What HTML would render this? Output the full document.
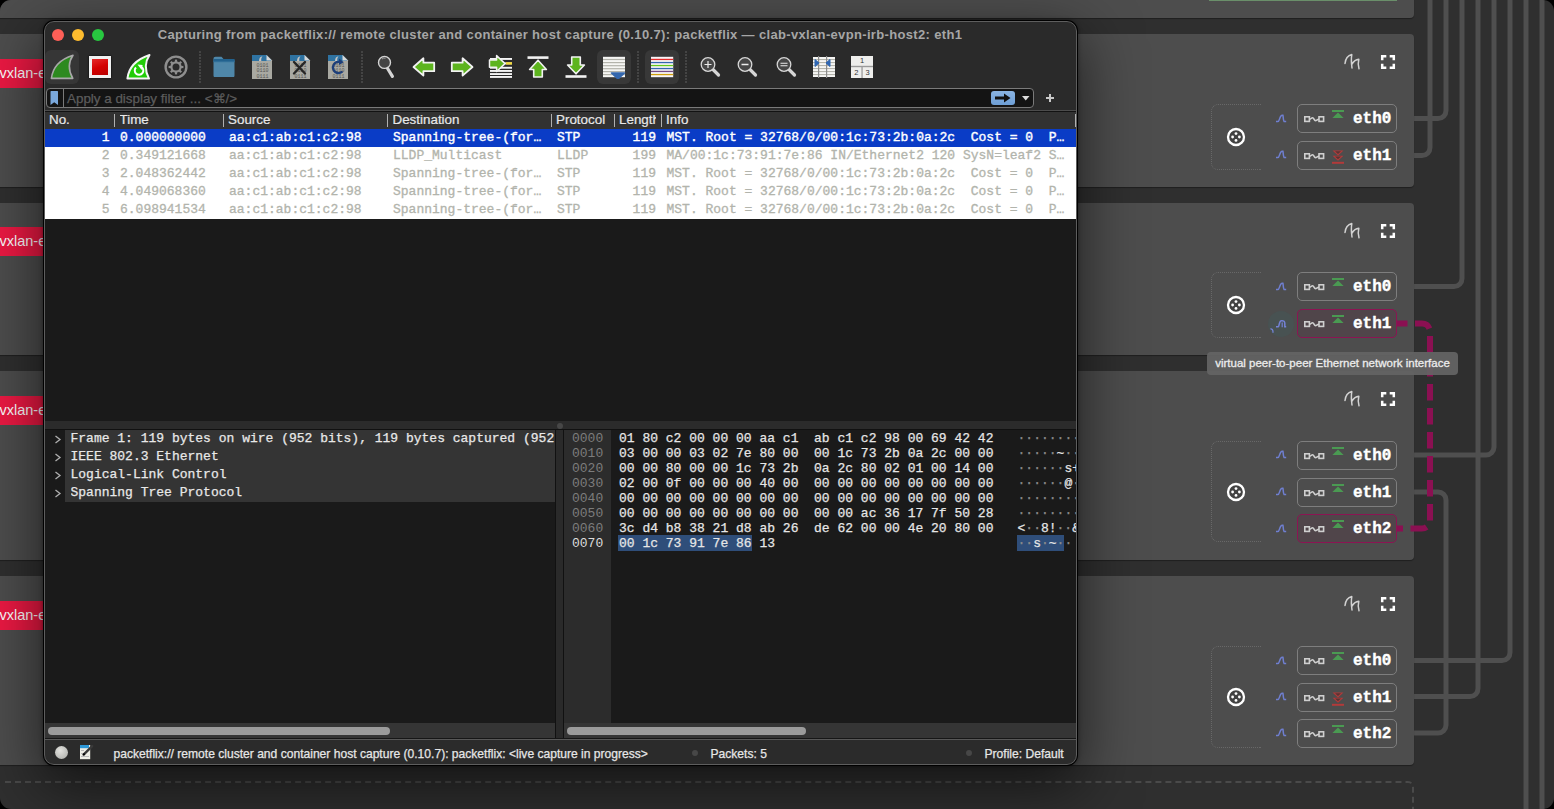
<!DOCTYPE html>
<html><head><meta charset="utf-8"><style>
*{margin:0;padding:0;box-sizing:border-box}
html,body{width:1554px;height:809px;overflow:hidden;background:#000}
body{font-family:"Liberation Sans",sans-serif;position:relative}
.a{position:absolute}
#screen{position:absolute;left:0;top:0;width:1554px;height:809px;border-radius:11px;overflow:hidden;background:#2f2f2f}
.panel{position:absolute;left:-20px;width:1434px;background:#4d4d4d;border-radius:4px;box-shadow:0 1px 1px rgba(0,0,0,.35)}
.pill{position:absolute;left:-20px;width:64px;height:29px;background:#ec1943;color:#fff;font-size:14.5px;line-height:29px;padding-left:19.5px;white-space:nowrap;overflow:hidden}
.eth{position:absolute;left:1297px;width:100px;height:29px;border:1px solid #7e7e7e;border-radius:5px}
.eth.sel{border-color:#8c1453;background:#50454a}
.ethtxt{position:absolute;left:55px;top:5px;-webkit-text-stroke:0.35px #fff;font-family:"Liberation Mono",monospace;font-weight:bold;font-size:16px;color:#fff}
.mv{position:absolute;left:1211px;width:50px;border:1px dotted #686868;border-right:none;border-radius:7px 0 0 7px}
.mono{font-family:"Liberation Mono",monospace;font-size:13px;white-space:pre}
.hdr{position:absolute;top:110.5px;height:18px;line-height:18px;font-size:13.4px;color:#e8e8e8;white-space:nowrap;-webkit-text-stroke:0.2px #e8e8e8}
.hsep{position:absolute;top:114px;width:1px;height:13px;background:#b0b0b0}
.row{position:absolute;left:0;width:1554px;height:18px;line-height:18px}
.row span{position:absolute;top:0}
.sb{position:absolute;top:740.5px;line-height:26px;font-size:12.08px;color:#e6e6e6;white-space:nowrap;-webkit-text-stroke:0.25px #e6e6e6}
.lt{-webkit-text-stroke:0.25px currentColor}
</style></head><body><div id="screen">
<svg class="a" style="left:0;top:0" width="1554" height="809"><g fill="none" stroke="#4f4f4f" stroke-width="5">
<path d="M1397 155.5H1422A8 8 0 0 0 1430 147.5V-5"/>
<path d="M1397 118.5H1438A8 8 0 0 0 1446 110.5V-5"/>
<path d="M1397 286.5H1454A8 8 0 0 0 1462 278.5V-5"/>
<path d="M1397 455H1486A8 8 0 0 0 1494 447V-5"/>
<path d="M1397 492H1438A8 8 0 0 1 1446 500V725A8 8 0 0 1 1438 733H1397"/>
<path d="M1397 660.5H1502A8 8 0 0 0 1510 652.5V-5"/>
<path d="M1397 696.5H1470A8 8 0 0 0 1478 688.5V-5"/>
<path d="M1526 -5V815"/>
<path d="M1542 -5V815"/>
</g></svg>
<div class="panel" style="top:-30px;height:48px"></div>
<div class="a" style="left:1209px;top:0;width:188px;height:1px;background:#6a8f6a"></div>
<div class="panel" style="top:34px;height:153px"></div>
<div class="panel" style="top:203px;height:152px"></div>
<div class="panel" style="top:371px;height:189px"></div>
<div class="panel" style="top:576px;height:189px"></div>
<div class="a" style="left:5px;top:781px;width:1409px;height:40px;border:2px dashed #4a4a4a;border-bottom:none;border-left:none;border-radius:0 6px 0 0"></div>
<div class="pill" style="top:59px">vxlan-evpn</div>
<div class="pill" style="top:227px">vxlan-evpn</div>
<div class="pill" style="top:396px">vxlan-evpn</div>
<div class="pill" style="top:601px">vxlan-evpn</div>
<svg class="a" style="left:1343px;top:53px" width="18" height="18"><path d="M2 10.5C2.5 6 5 2.6 8.8 1.6C8.2 5 8.3 10 9 15M9 11C10.5 8.5 13 6.5 15.8 6.2C15 9.5 15 13 16 15.8" fill="none" stroke="#d2d2d2" stroke-width="1.5" stroke-linecap="round" stroke-linejoin="round"/></svg>
<svg class="a" style="left:1380px;top:54px" width="16" height="16"><path d="M2.2 6.3V2.2H6.3M9.7 2.2H13.8V6.3M13.8 9.7V13.8H9.7M6.3 13.8H2.2V9.7" fill="none" stroke="#fff" stroke-width="2.5"/></svg>
<div class="mv" style="top:104px;height:66px"></div>
<svg class="a" style="left:1226px;top:127px" width="20" height="20"><circle cx="10" cy="10" r="8" fill="#424242" stroke="#fff" stroke-width="2.3"/><g fill="#fff"><circle cx="10" cy="6.6" r="1.4"/><circle cx="10" cy="13.4" r="1.4"/><circle cx="6.6" cy="10" r="1.4"/><circle cx="13.4" cy="10" r="1.4"/></g></svg>
<svg class="a" style="left:1275px;top:113.5px" width="12" height="9"><path d="M1 7.6H2.8C4.6 7.6 4.6 1.3 7.2 1.3H7.9C8.3 2.5 8.3 7.6 9.3 7.6H11.2" fill="none" stroke="#6f7fd0" stroke-width="1.5"/></svg>
<svg class="a" style="left:1275px;top:150px" width="12" height="9"><path d="M1 7.6H2.8C4.6 7.6 4.6 1.3 7.2 1.3H7.9C8.3 2.5 8.3 7.6 9.3 7.6H11.2" fill="none" stroke="#6f7fd0" stroke-width="1.5"/></svg>
<div class="eth" style="top:104px">
<svg class="a" style="left:6px;top:11px" width="21" height="7"><g fill="none" stroke="#cfcfcf" stroke-width="1.6"><rect x="0.8" y="0.8" width="4.6" height="4.6"/><rect x="15" y="0.8" width="4.6" height="4.6"/><path d="M5.4 3.3C7 3.3 7.2 1.8 8.6 1.8C10 1.8 10 4.6 11.5 4.6C12.8 4.6 13 3.3 15 3.3"/></g></svg>
<svg class="a" style="left:34px;top:5px" width="13" height="9"><rect x="0" y="0" width="12" height="2" fill="#4a9a52"/><path d="M6 2.5L11.6 8H0.4Z" fill="#4a9a52"/></svg>
<div class="ethtxt">eth0</div>
</div>
<div class="eth" style="top:141px">
<svg class="a" style="left:6px;top:11px" width="21" height="7"><g fill="none" stroke="#cfcfcf" stroke-width="1.6"><rect x="0.8" y="0.8" width="4.6" height="4.6"/><rect x="15" y="0.8" width="4.6" height="4.6"/><path d="M5.4 3.3C7 3.3 7.2 1.8 8.6 1.8C10 1.8 10 4.6 11.5 4.6C12.8 4.6 13 3.3 15 3.3"/></g></svg>
<svg class="a" style="left:34px;top:8px" width="13" height="15"><g fill="#b23a3a"><path d="M0.5 0.5H11.5L6 5.6Z"/><path d="M0.5 5.8H11.5L6 10.8Z"/><rect x="0" y="11.8" width="12" height="2"/></g><path d="M3 1.3H9L6 4Z M3 6.6H9L6 9.3Z" fill="#5a3434"/></svg>
<div class="ethtxt">eth1</div>
</div>
<svg class="a" style="left:1343px;top:222px" width="18" height="18"><path d="M2 10.5C2.5 6 5 2.6 8.8 1.6C8.2 5 8.3 10 9 15M9 11C10.5 8.5 13 6.5 15.8 6.2C15 9.5 15 13 16 15.8" fill="none" stroke="#d2d2d2" stroke-width="1.5" stroke-linecap="round" stroke-linejoin="round"/></svg>
<svg class="a" style="left:1380px;top:223px" width="16" height="16"><path d="M2.2 6.3V2.2H6.3M9.7 2.2H13.8V6.3M13.8 9.7V13.8H9.7M6.3 13.8H2.2V9.7" fill="none" stroke="#fff" stroke-width="2.5"/></svg>
<div class="mv" style="top:272px;height:66px"></div>
<svg class="a" style="left:1226px;top:295px" width="20" height="20"><circle cx="10" cy="10" r="8" fill="#424242" stroke="#fff" stroke-width="2.3"/><g fill="#fff"><circle cx="10" cy="6.6" r="1.4"/><circle cx="10" cy="13.4" r="1.4"/><circle cx="6.6" cy="10" r="1.4"/><circle cx="13.4" cy="10" r="1.4"/></g></svg>
<svg class="a" style="left:1275px;top:281.5px" width="12" height="9"><path d="M1 7.6H2.8C4.6 7.6 4.6 1.3 7.2 1.3H7.9C8.3 2.5 8.3 7.6 9.3 7.6H11.2" fill="none" stroke="#6f7fd0" stroke-width="1.5"/></svg>
<div class="a" style="left:1268.1px;top:310.5px;width:26px;height:26px;border-radius:50%;background:#485252"></div>
<svg class="a" style="left:1268px;top:313.5px" width="20" height="20"><path d="M8 12.8H10.3C11.2 12.8 11 7 13.2 6.8C15.6 6.5 16.6 7 16.8 9V12.8H18.2" fill="none" stroke="#7482d6" stroke-width="1.5"/><path d="M14.2 8.5V13.2" fill="none" stroke="#7482d6" stroke-width="1.2"/><path d="M2.4 14.8C4 14.6 5.2 15.8 5 18.8" fill="none" stroke="#7482d6" stroke-width="1.3"/></svg>
<div class="eth" style="top:272px">
<svg class="a" style="left:6px;top:11px" width="21" height="7"><g fill="none" stroke="#cfcfcf" stroke-width="1.6"><rect x="0.8" y="0.8" width="4.6" height="4.6"/><rect x="15" y="0.8" width="4.6" height="4.6"/><path d="M5.4 3.3C7 3.3 7.2 1.8 8.6 1.8C10 1.8 10 4.6 11.5 4.6C12.8 4.6 13 3.3 15 3.3"/></g></svg>
<svg class="a" style="left:34px;top:5px" width="13" height="9"><rect x="0" y="0" width="12" height="2" fill="#4a9a52"/><path d="M6 2.5L11.6 8H0.4Z" fill="#4a9a52"/></svg>
<div class="ethtxt">eth0</div>
</div>
<div class="eth sel" style="top:309px">
<svg class="a" style="left:6px;top:11px" width="21" height="7"><g fill="none" stroke="#cfcfcf" stroke-width="1.6"><rect x="0.8" y="0.8" width="4.6" height="4.6"/><rect x="15" y="0.8" width="4.6" height="4.6"/><path d="M5.4 3.3C7 3.3 7.2 1.8 8.6 1.8C10 1.8 10 4.6 11.5 4.6C12.8 4.6 13 3.3 15 3.3"/></g></svg>
<svg class="a" style="left:34px;top:5px" width="13" height="9"><rect x="0" y="0" width="12" height="2" fill="#4a9a52"/><path d="M6 2.5L11.6 8H0.4Z" fill="#4a9a52"/></svg>
<div class="ethtxt">eth1</div>
</div>
<svg class="a" style="left:1343px;top:390px" width="18" height="18"><path d="M2 10.5C2.5 6 5 2.6 8.8 1.6C8.2 5 8.3 10 9 15M9 11C10.5 8.5 13 6.5 15.8 6.2C15 9.5 15 13 16 15.8" fill="none" stroke="#d2d2d2" stroke-width="1.5" stroke-linecap="round" stroke-linejoin="round"/></svg>
<svg class="a" style="left:1380px;top:391px" width="16" height="16"><path d="M2.2 6.3V2.2H6.3M9.7 2.2H13.8V6.3M13.8 9.7V13.8H9.7M6.3 13.8H2.2V9.7" fill="none" stroke="#fff" stroke-width="2.5"/></svg>
<div class="mv" style="top:441px;height:101px"></div>
<svg class="a" style="left:1226px;top:482px" width="20" height="20"><circle cx="10" cy="10" r="8" fill="#424242" stroke="#fff" stroke-width="2.3"/><g fill="#fff"><circle cx="10" cy="6.6" r="1.4"/><circle cx="10" cy="13.4" r="1.4"/><circle cx="6.6" cy="10" r="1.4"/><circle cx="13.4" cy="10" r="1.4"/></g></svg>
<svg class="a" style="left:1275px;top:450px" width="12" height="9"><path d="M1 7.6H2.8C4.6 7.6 4.6 1.3 7.2 1.3H7.9C8.3 2.5 8.3 7.6 9.3 7.6H11.2" fill="none" stroke="#6f7fd0" stroke-width="1.5"/></svg>
<svg class="a" style="left:1275px;top:487px" width="12" height="9"><path d="M1 7.6H2.8C4.6 7.6 4.6 1.3 7.2 1.3H7.9C8.3 2.5 8.3 7.6 9.3 7.6H11.2" fill="none" stroke="#6f7fd0" stroke-width="1.5"/></svg>
<svg class="a" style="left:1275px;top:523.5px" width="12" height="9"><path d="M1 7.6H2.8C4.6 7.6 4.6 1.3 7.2 1.3H7.9C8.3 2.5 8.3 7.6 9.3 7.6H11.2" fill="none" stroke="#6f7fd0" stroke-width="1.5"/></svg>
<div class="eth" style="top:441px">
<svg class="a" style="left:6px;top:11px" width="21" height="7"><g fill="none" stroke="#cfcfcf" stroke-width="1.6"><rect x="0.8" y="0.8" width="4.6" height="4.6"/><rect x="15" y="0.8" width="4.6" height="4.6"/><path d="M5.4 3.3C7 3.3 7.2 1.8 8.6 1.8C10 1.8 10 4.6 11.5 4.6C12.8 4.6 13 3.3 15 3.3"/></g></svg>
<svg class="a" style="left:34px;top:5px" width="13" height="9"><rect x="0" y="0" width="12" height="2" fill="#4a9a52"/><path d="M6 2.5L11.6 8H0.4Z" fill="#4a9a52"/></svg>
<div class="ethtxt">eth0</div>
</div>
<div class="eth" style="top:478px">
<svg class="a" style="left:6px;top:11px" width="21" height="7"><g fill="none" stroke="#cfcfcf" stroke-width="1.6"><rect x="0.8" y="0.8" width="4.6" height="4.6"/><rect x="15" y="0.8" width="4.6" height="4.6"/><path d="M5.4 3.3C7 3.3 7.2 1.8 8.6 1.8C10 1.8 10 4.6 11.5 4.6C12.8 4.6 13 3.3 15 3.3"/></g></svg>
<svg class="a" style="left:34px;top:5px" width="13" height="9"><rect x="0" y="0" width="12" height="2" fill="#4a9a52"/><path d="M6 2.5L11.6 8H0.4Z" fill="#4a9a52"/></svg>
<div class="ethtxt">eth1</div>
</div>
<div class="eth sel" style="top:514px">
<svg class="a" style="left:6px;top:11px" width="21" height="7"><g fill="none" stroke="#cfcfcf" stroke-width="1.6"><rect x="0.8" y="0.8" width="4.6" height="4.6"/><rect x="15" y="0.8" width="4.6" height="4.6"/><path d="M5.4 3.3C7 3.3 7.2 1.8 8.6 1.8C10 1.8 10 4.6 11.5 4.6C12.8 4.6 13 3.3 15 3.3"/></g></svg>
<svg class="a" style="left:34px;top:5px" width="13" height="9"><rect x="0" y="0" width="12" height="2" fill="#4a9a52"/><path d="M6 2.5L11.6 8H0.4Z" fill="#4a9a52"/></svg>
<div class="ethtxt">eth2</div>
</div>
<svg class="a" style="left:1343px;top:595px" width="18" height="18"><path d="M2 10.5C2.5 6 5 2.6 8.8 1.6C8.2 5 8.3 10 9 15M9 11C10.5 8.5 13 6.5 15.8 6.2C15 9.5 15 13 16 15.8" fill="none" stroke="#d2d2d2" stroke-width="1.5" stroke-linecap="round" stroke-linejoin="round"/></svg>
<svg class="a" style="left:1380px;top:596px" width="16" height="16"><path d="M2.2 6.3V2.2H6.3M9.7 2.2H13.8V6.3M13.8 9.7V13.8H9.7M6.3 13.8H2.2V9.7" fill="none" stroke="#fff" stroke-width="2.5"/></svg>
<div class="mv" style="top:646px;height:102px"></div>
<svg class="a" style="left:1226px;top:687px" width="20" height="20"><circle cx="10" cy="10" r="8" fill="#424242" stroke="#fff" stroke-width="2.3"/><g fill="#fff"><circle cx="10" cy="6.6" r="1.4"/><circle cx="10" cy="13.4" r="1.4"/><circle cx="6.6" cy="10" r="1.4"/><circle cx="13.4" cy="10" r="1.4"/></g></svg>
<svg class="a" style="left:1275px;top:655.5px" width="12" height="9"><path d="M1 7.6H2.8C4.6 7.6 4.6 1.3 7.2 1.3H7.9C8.3 2.5 8.3 7.6 9.3 7.6H11.2" fill="none" stroke="#6f7fd0" stroke-width="1.5"/></svg>
<svg class="a" style="left:1275px;top:692px" width="12" height="9"><path d="M1 7.6H2.8C4.6 7.6 4.6 1.3 7.2 1.3H7.9C8.3 2.5 8.3 7.6 9.3 7.6H11.2" fill="none" stroke="#6f7fd0" stroke-width="1.5"/></svg>
<svg class="a" style="left:1275px;top:728px" width="12" height="9"><path d="M1 7.6H2.8C4.6 7.6 4.6 1.3 7.2 1.3H7.9C8.3 2.5 8.3 7.6 9.3 7.6H11.2" fill="none" stroke="#6f7fd0" stroke-width="1.5"/></svg>
<div class="eth" style="top:646px">
<svg class="a" style="left:6px;top:11px" width="21" height="7"><g fill="none" stroke="#cfcfcf" stroke-width="1.6"><rect x="0.8" y="0.8" width="4.6" height="4.6"/><rect x="15" y="0.8" width="4.6" height="4.6"/><path d="M5.4 3.3C7 3.3 7.2 1.8 8.6 1.8C10 1.8 10 4.6 11.5 4.6C12.8 4.6 13 3.3 15 3.3"/></g></svg>
<svg class="a" style="left:34px;top:5px" width="13" height="9"><rect x="0" y="0" width="12" height="2" fill="#4a9a52"/><path d="M6 2.5L11.6 8H0.4Z" fill="#4a9a52"/></svg>
<div class="ethtxt">eth0</div>
</div>
<div class="eth" style="top:683px">
<svg class="a" style="left:6px;top:11px" width="21" height="7"><g fill="none" stroke="#cfcfcf" stroke-width="1.6"><rect x="0.8" y="0.8" width="4.6" height="4.6"/><rect x="15" y="0.8" width="4.6" height="4.6"/><path d="M5.4 3.3C7 3.3 7.2 1.8 8.6 1.8C10 1.8 10 4.6 11.5 4.6C12.8 4.6 13 3.3 15 3.3"/></g></svg>
<svg class="a" style="left:34px;top:8px" width="13" height="15"><g fill="#b23a3a"><path d="M0.5 0.5H11.5L6 5.6Z"/><path d="M0.5 5.8H11.5L6 10.8Z"/><rect x="0" y="11.8" width="12" height="2"/></g><path d="M3 1.3H9L6 4Z M3 6.6H9L6 9.3Z" fill="#5a3434"/></svg>
<div class="ethtxt">eth1</div>
</div>
<div class="eth" style="top:719px">
<svg class="a" style="left:6px;top:11px" width="21" height="7"><g fill="none" stroke="#cfcfcf" stroke-width="1.6"><rect x="0.8" y="0.8" width="4.6" height="4.6"/><rect x="15" y="0.8" width="4.6" height="4.6"/><path d="M5.4 3.3C7 3.3 7.2 1.8 8.6 1.8C10 1.8 10 4.6 11.5 4.6C12.8 4.6 13 3.3 15 3.3"/></g></svg>
<svg class="a" style="left:34px;top:5px" width="13" height="9"><rect x="0" y="0" width="12" height="2" fill="#4a9a52"/><path d="M6 2.5L11.6 8H0.4Z" fill="#4a9a52"/></svg>
<div class="ethtxt">eth2</div>
</div>
<svg class="a" style="left:0;top:0" width="1554" height="809"><path d="M1397 323.5H1422A8 8 0 0 1 1430 331.5V520.5A8 8 0 0 1 1422 528.5H1397" fill="none" stroke="#8b1052" stroke-width="6" stroke-dasharray="16.5 7.5" stroke-dashoffset="6"/></svg>
<div class="a" style="left:1207px;top:352px;width:251px;height:23px;border-radius:4px;background:rgba(100,100,100,.93);color:#ececec;font-size:11.5px;line-height:23px;text-align:center;white-space:nowrap;-webkit-text-stroke:0.3px #ececec">virtual peer-to-peer Ethernet network interface</div>
<div id="win" class="a" style="left:43px;top:20px;width:1035px;height:746px;border-radius:11px;background:#000;box-shadow:0 18px 60px 2px rgba(0,0,0,.6),0 0 4px rgba(0,0,0,.4)">
<div class="a" style="left:1px;top:1px;width:1033px;height:744px;border-radius:10px;background:#2a2a2a;overflow:hidden">
<div class="a" style="left:-44px;top:-21px;width:1554px;height:809px">
<div class="a" style="left:44px;top:26px;width:1032px;text-align:center;font-weight:bold;font-size:13px;letter-spacing:0.34px;color:#a6a6a6;line-height:17px;white-space:nowrap">Capturing from packetflix:// remote cluster and container host capture (0.10.7): packetflix — clab-vxlan-evpn-irb-host2: eth1</div>
<div class="a" style="left:52px;top:29px;width:12px;height:12px;border-radius:50%;background:#fe5f57"></div>
<div class="a" style="left:72px;top:29px;width:12px;height:12px;border-radius:50%;background:#febc2e"></div>
<div class="a" style="left:92px;top:29px;width:12px;height:12px;border-radius:50%;background:#28c840"></div>
<div class="a" style="left:46px;top:88px;width:988px;height:20px;border:1px solid #7a7a7a;border-radius:4px;background:#141414"></div>
<div class="a" style="left:63px;top:89px;width:1px;height:18px;background:#7a7a7a"></div>
<svg class="a" style="left:49px;top:90px" width="10" height="16"><path d="M1.5 1.6C1.5 1.2 1.7 1 2.1 1H8.4C8.8 1 9 1.2 9 1.6V15L5.25 12.2L1.5 15Z" fill="#7aa8dc"/></svg>
<div class="a" style="left:67px;top:90px;line-height:18px;font-size:13.4px;color:#5c5c5c;white-space:nowrap;-webkit-text-stroke:0.25px #5c5c5c">Apply a display filter ... &lt;⌘/&gt;</div>
<div class="a" style="left:991px;top:91px;width:24px;height:14px;border-radius:3px;background:linear-gradient(#8ab4e2,#6e9fd6)"></div>
<svg class="a" style="left:994px;top:93px" width="18" height="10"><path d="M1 3.5H10V0.5L16.5 5L10 9.5V6.5H1Z" fill="#111"/></svg>
<svg class="a" style="left:1022px;top:96px" width="8" height="5"><path d="M0 0H7.5L3.75 4.5Z" fill="#dcdcdc"/></svg>
<div class="a" style="left:1046px;top:97px;width:8px;height:2px;background:#c8c8c8"></div><div class="a" style="left:1049px;top:94px;width:2px;height:8px;background:#c8c8c8"></div>
<div class="a" style="left:44px;top:110px;width:1033px;height:1px;background:#4c4c4c"></div>
<div class="a" style="left:44px;top:111px;width:1033px;height:18px;background:#323232"></div>
<div class="a" style="left:44px;top:111px;width:1033px;height:1px;background:#121212"></div>
<div class="hdr" style="left:49px;width:200px;overflow:hidden">No.</div>
<div class="hdr" style="left:119.5px;width:200px;overflow:hidden">Time</div>
<div class="hdr" style="left:228px;width:200px;overflow:hidden">Source</div>
<div class="hdr" style="left:392.5px;width:200px;overflow:hidden">Destination</div>
<div class="hdr" style="left:556px;width:200px;overflow:hidden">Protocol</div>
<div class="hdr" style="left:619px;width:37px;overflow:hidden">Length</div>
<div class="hdr" style="left:666px;width:200px;overflow:hidden">Info</div>
<div class="hsep" style="left:114px"></div>
<div class="hsep" style="left:223px"></div>
<div class="hsep" style="left:387px"></div>
<div class="hsep" style="left:551px"></div>
<div class="hsep" style="left:614px"></div>
<div class="hsep" style="left:661px"></div>
<div class="hsep" style="left:1075px"></div>
<div class="a" style="left:44px;top:129px;width:1033px;height:292px;background:#1a1a1a"></div>
<div class="a" style="left:44px;top:129px;width:1033px;height:18px;background:#0a3cc6"></div>
<div class="row mono" style="top:129px;color:#ffffff;font-weight:normal;-webkit-text-stroke:0.4px #fff">
<span style="right:1444.5px">1</span>
<span style="left:120px">0.000000000</span>
<span style="left:229px">aa:c1:ab:c1:c2:98</span>
<span style="left:393px">Spanning-tree-(for…</span>
<span style="left:557px">STP</span>
<span style="right:898px">119</span>
<span style="left:666.5px">MST. Root = 32768/0/00:1c:73:2b:0a:2c  Cost = 0  P…</span>
</div>
<div class="a" style="left:44px;top:147px;width:1033px;height:18px;background:#ffffff"></div>
<div class="row mono" style="top:147px;color:#b2b4ac;font-weight:normal;-webkit-text-stroke:0.3px #b2b4ac">
<span style="right:1444.5px">2</span>
<span style="left:120px">0.349121668</span>
<span style="left:229px">aa:c1:ab:c1:c2:98</span>
<span style="left:393px">LLDP_Multicast</span>
<span style="left:557px">LLDP</span>
<span style="right:898px">199</span>
<span style="left:666.5px">MA/00:1c:73:91:7e:86 IN/Ethernet2 120 SysN=leaf2 S…</span>
</div>
<div class="a" style="left:44px;top:165px;width:1033px;height:18px;background:#ffffff"></div>
<div class="row mono" style="top:165px;color:#b2b4ac;font-weight:normal;-webkit-text-stroke:0.3px #b2b4ac">
<span style="right:1444.5px">3</span>
<span style="left:120px">2.048362442</span>
<span style="left:229px">aa:c1:ab:c1:c2:98</span>
<span style="left:393px">Spanning-tree-(for…</span>
<span style="left:557px">STP</span>
<span style="right:898px">119</span>
<span style="left:666.5px">MST. Root = 32768/0/00:1c:73:2b:0a:2c  Cost = 0  P…</span>
</div>
<div class="a" style="left:44px;top:183px;width:1033px;height:18px;background:#ffffff"></div>
<div class="row mono" style="top:183px;color:#b2b4ac;font-weight:normal;-webkit-text-stroke:0.3px #b2b4ac">
<span style="right:1444.5px">4</span>
<span style="left:120px">4.049068360</span>
<span style="left:229px">aa:c1:ab:c1:c2:98</span>
<span style="left:393px">Spanning-tree-(for…</span>
<span style="left:557px">STP</span>
<span style="right:898px">119</span>
<span style="left:666.5px">MST. Root = 32768/0/00:1c:73:2b:0a:2c  Cost = 0  P…</span>
</div>
<div class="a" style="left:44px;top:201px;width:1033px;height:18px;background:#ffffff"></div>
<div class="row mono" style="top:201px;color:#b2b4ac;font-weight:normal;-webkit-text-stroke:0.3px #b2b4ac">
<span style="right:1444.5px">5</span>
<span style="left:120px">6.098941534</span>
<span style="left:229px">aa:c1:ab:c1:c2:98</span>
<span style="left:393px">Spanning-tree-(for…</span>
<span style="left:557px">STP</span>
<span style="right:898px">119</span>
<span style="left:666.5px">MST. Root = 32768/0/00:1c:73:2b:0a:2c  Cost = 0  P…</span>
</div>
<div class="a" style="left:44px;top:421px;width:1033px;height:8px;background:#2b2b2b"></div>
<div class="a" style="left:44px;top:429px;width:511px;height:294px;background:#1a1a1a"></div>
<div class="a" style="left:65px;top:430px;width:490px;height:72px;background:#343434"></div>
<svg class="a" style="left:54px;top:435px" width="8" height="9"><path d="M1.5 1L6 4.5L1.5 8" fill="none" stroke="#b0b0b0" stroke-width="1.3"/></svg>
<div class="a mono lt" style="left:70.5px;top:430px;width:484px;overflow:hidden;line-height:18px;color:#e8e8e8">Frame 1: 119 bytes on wire (952 bits), 119 bytes captured (952 bits)</div>
<svg class="a" style="left:54px;top:453px" width="8" height="9"><path d="M1.5 1L6 4.5L1.5 8" fill="none" stroke="#b0b0b0" stroke-width="1.3"/></svg>
<div class="a mono lt" style="left:70.5px;top:448px;width:484px;overflow:hidden;line-height:18px;color:#e8e8e8">IEEE 802.3 Ethernet</div>
<svg class="a" style="left:54px;top:471px" width="8" height="9"><path d="M1.5 1L6 4.5L1.5 8" fill="none" stroke="#b0b0b0" stroke-width="1.3"/></svg>
<div class="a mono lt" style="left:70.5px;top:466px;width:484px;overflow:hidden;line-height:18px;color:#e8e8e8">Logical-Link Control</div>
<svg class="a" style="left:54px;top:489px" width="8" height="9"><path d="M1.5 1L6 4.5L1.5 8" fill="none" stroke="#b0b0b0" stroke-width="1.3"/></svg>
<div class="a mono lt" style="left:70.5px;top:484px;width:484px;overflow:hidden;line-height:18px;color:#e8e8e8">Spanning Tree Protocol</div>
<div class="a" style="left:555px;top:429px;width:9px;height:310px;background:#2a2a2a;border-left:1px solid #111;border-right:1px solid #111"></div>
<div class="a" style="left:44px;top:429px;width:1033px;height:1px;background:#111"></div>
<div class="a" style="left:557px;top:423px;width:6px;height:6px;border-radius:50%;background:#474747"></div>
<div class="a" style="left:564px;top:430px;width:514px;height:293px;background:#1a1a1a"></div>
<div class="a" style="left:564px;top:430px;width:47px;height:293px;background:#2c2c2c"></div>
<div class="a" style="left:618px;top:535px;width:134px;height:16px;background:#2f4e7a"></div>
<div class="a" style="left:1017px;top:535px;width:47px;height:16px;background:#2f4e7a"></div>
<div class="a mono" style="left:572px;top:431px;line-height:15px;color:#7c7c7c">0000</div>
<div class="a mono lt" style="left:619px;top:431px;line-height:15px;color:#e6e6e6">01 80 c2 00 00 00 aa c1  ab c1 c2 98 00 69 42 42</div>
<div class="a mono lt" style="left:1017.5px;top:431px;line-height:15px;color:#e6e6e6"><span style="color:#8c8c8c">·</span><span style="color:#8c8c8c">·</span><span style="color:#8c8c8c">·</span><span style="color:#8c8c8c">·</span><span style="color:#8c8c8c">·</span><span style="color:#8c8c8c">·</span><span style="color:#8c8c8c">·</span><span style="color:#8c8c8c">·</span> <span style="color:#8c8c8c">·</span><span style="color:#8c8c8c">·</span><span style="color:#8c8c8c">·</span><span style="color:#8c8c8c">·</span><span style="color:#8c8c8c">·</span><span style="color:#8c8c8c">·</span><span style="color:#8c8c8c">·</span><span style="color:#8c8c8c">·</span></div>
<div class="a mono" style="left:572px;top:446px;line-height:15px;color:#7c7c7c">0010</div>
<div class="a mono lt" style="left:619px;top:446px;line-height:15px;color:#e6e6e6">03 00 00 03 02 7e 80 00  00 1c 73 2b 0a 2c 00 00</div>
<div class="a mono lt" style="left:1017.5px;top:446px;line-height:15px;color:#e6e6e6"><span style="color:#8c8c8c">·</span><span style="color:#8c8c8c">·</span><span style="color:#8c8c8c">·</span><span style="color:#8c8c8c">·</span><span style="color:#8c8c8c">·</span>~<span style="color:#8c8c8c">·</span><span style="color:#8c8c8c">·</span> <span style="color:#8c8c8c">·</span><span style="color:#8c8c8c">·</span>s+<span style="color:#8c8c8c">·</span>,<span style="color:#8c8c8c">·</span><span style="color:#8c8c8c">·</span></div>
<div class="a mono" style="left:572px;top:461px;line-height:15px;color:#7c7c7c">0020</div>
<div class="a mono lt" style="left:619px;top:461px;line-height:15px;color:#e6e6e6">00 00 80 00 00 1c 73 2b  0a 2c 80 02 01 00 14 00</div>
<div class="a mono lt" style="left:1017.5px;top:461px;line-height:15px;color:#e6e6e6"><span style="color:#8c8c8c">·</span><span style="color:#8c8c8c">·</span><span style="color:#8c8c8c">·</span><span style="color:#8c8c8c">·</span><span style="color:#8c8c8c">·</span><span style="color:#8c8c8c">·</span>s+ <span style="color:#8c8c8c">·</span>,<span style="color:#8c8c8c">·</span><span style="color:#8c8c8c">·</span><span style="color:#8c8c8c">·</span><span style="color:#8c8c8c">·</span><span style="color:#8c8c8c">·</span><span style="color:#8c8c8c">·</span></div>
<div class="a mono" style="left:572px;top:476px;line-height:15px;color:#7c7c7c">0030</div>
<div class="a mono lt" style="left:619px;top:476px;line-height:15px;color:#e6e6e6">02 00 0f 00 00 00 40 00  00 00 00 00 00 00 00 00</div>
<div class="a mono lt" style="left:1017.5px;top:476px;line-height:15px;color:#e6e6e6"><span style="color:#8c8c8c">·</span><span style="color:#8c8c8c">·</span><span style="color:#8c8c8c">·</span><span style="color:#8c8c8c">·</span><span style="color:#8c8c8c">·</span><span style="color:#8c8c8c">·</span>@<span style="color:#8c8c8c">·</span> <span style="color:#8c8c8c">·</span><span style="color:#8c8c8c">·</span><span style="color:#8c8c8c">·</span><span style="color:#8c8c8c">·</span><span style="color:#8c8c8c">·</span><span style="color:#8c8c8c">·</span><span style="color:#8c8c8c">·</span><span style="color:#8c8c8c">·</span></div>
<div class="a mono" style="left:572px;top:491px;line-height:15px;color:#7c7c7c">0040</div>
<div class="a mono lt" style="left:619px;top:491px;line-height:15px;color:#e6e6e6">00 00 00 00 00 00 00 00  00 00 00 00 00 00 00 00</div>
<div class="a mono lt" style="left:1017.5px;top:491px;line-height:15px;color:#e6e6e6"><span style="color:#8c8c8c">·</span><span style="color:#8c8c8c">·</span><span style="color:#8c8c8c">·</span><span style="color:#8c8c8c">·</span><span style="color:#8c8c8c">·</span><span style="color:#8c8c8c">·</span><span style="color:#8c8c8c">·</span><span style="color:#8c8c8c">·</span> <span style="color:#8c8c8c">·</span><span style="color:#8c8c8c">·</span><span style="color:#8c8c8c">·</span><span style="color:#8c8c8c">·</span><span style="color:#8c8c8c">·</span><span style="color:#8c8c8c">·</span><span style="color:#8c8c8c">·</span><span style="color:#8c8c8c">·</span></div>
<div class="a mono" style="left:572px;top:506px;line-height:15px;color:#7c7c7c">0050</div>
<div class="a mono lt" style="left:619px;top:506px;line-height:15px;color:#e6e6e6">00 00 00 00 00 00 00 00  00 00 ac 36 17 7f 50 28</div>
<div class="a mono lt" style="left:1017.5px;top:506px;line-height:15px;color:#e6e6e6"><span style="color:#8c8c8c">·</span><span style="color:#8c8c8c">·</span><span style="color:#8c8c8c">·</span><span style="color:#8c8c8c">·</span><span style="color:#8c8c8c">·</span><span style="color:#8c8c8c">·</span><span style="color:#8c8c8c">·</span><span style="color:#8c8c8c">·</span> <span style="color:#8c8c8c">·</span><span style="color:#8c8c8c">·</span>6<span style="color:#8c8c8c">·</span><span style="color:#8c8c8c">·</span>P(</div>
<div class="a mono" style="left:572px;top:521px;line-height:15px;color:#7c7c7c">0060</div>
<div class="a mono lt" style="left:619px;top:521px;line-height:15px;color:#e6e6e6">3c d4 b8 38 21 d8 ab 26  de 62 00 00 4e 20 80 00</div>
<div class="a mono lt" style="left:1017.5px;top:521px;line-height:15px;color:#e6e6e6">&lt;<span style="color:#8c8c8c">·</span><span style="color:#8c8c8c">·</span>8!<span style="color:#8c8c8c">·</span><span style="color:#8c8c8c">·</span>&amp; <span style="color:#8c8c8c">·</span>b<span style="color:#8c8c8c">·</span><span style="color:#8c8c8c">·</span>N <span style="color:#8c8c8c">·</span><span style="color:#8c8c8c">·</span></div>
<div class="a mono" style="left:572px;top:536px;line-height:15px;color:#dcdcdc">0070</div>
<div class="a mono lt" style="left:619px;top:536px;line-height:15px;color:#e6e6e6">00 1c 73 91 7e 86 13</div>
<div class="a mono lt" style="left:1017.5px;top:536px;line-height:15px;color:#e6e6e6"><span style="color:#8c8c8c">·</span><span style="color:#8c8c8c">·</span>s<span style="color:#8c8c8c">·</span>~<span style="color:#8c8c8c">·</span><span style="color:#8c8c8c">·</span></div>
<div class="a" style="left:44px;top:723px;width:511px;height:16px;background:#353535"></div>
<div class="a" style="left:564px;top:723px;width:514px;height:16px;background:#353535"></div>
<div class="a" style="left:48px;top:727px;width:342px;height:8px;border-radius:4px;background:#9b9b9b"></div>
<div class="a" style="left:567px;top:727px;width:239px;height:8px;border-radius:4px;background:#9b9b9b"></div>
<div class="a" style="left:44px;top:738px;width:1033px;height:1px;background:#161616"></div>
<div class="a" style="left:44px;top:739px;width:1033px;height:1px;background:#585858"></div>
<div class="a" style="left:44px;top:740px;width:1033px;height:26px;background:#2b2b2b"></div>
<div class="a" style="left:54.5px;top:745.5px;width:13px;height:13px;border-radius:50%;background:radial-gradient(circle at 40% 35%,#e2e2de,#a9aaa6)"></div>
<svg class="a" style="left:79px;top:744px" width="16" height="16"><rect x="1" y="1" width="10.2" height="14.2" fill="#eeeee6"/><rect x="1" y="1" width="9" height="3.2" fill="#2d98d8"/><g fill="#bbb"><rect x="2" y="6" width="3" height="1"/><rect x="2" y="9" width="3" height="1"/><rect x="2" y="12" width="8" height="1"/></g><path d="M4.6 10.6L13.2 2.2" stroke="#3a3a3a" stroke-width="2.4" stroke-linecap="round"/><path d="M4.3 11L5.6 9.6" stroke="#000" stroke-width="1.8"/></svg>
<div class="sb" style="left:113.5px">packetflix:// remote cluster and container host capture (0.10.7): packetflix: &lt;live capture in progress&gt;</div>
<div class="a" style="left:691.5px;top:750px;width:6px;height:6px;border-radius:50%;background:#474747"></div>
<div class="sb" style="left:710.5px">Packets: 5</div>
<div class="a" style="left:966px;top:750px;width:6px;height:6px;border-radius:50%;background:#474747"></div>
<div class="sb" style="left:984.5px">Profile: Default</div>
<div class="a" style="left:45px;top:50px;width:34px;height:34px;border-radius:6px;background:#363636"></div>
<div class="a" style="left:597px;top:50px;width:34px;height:34px;border-radius:6px;background:#383838"></div>
<div class="a" style="left:645px;top:50px;width:34px;height:34px;border-radius:6px;background:#383838"></div>
<svg class="a" style="left:198.5px;top:51px" width="2" height="32"><line x1="1" y1="0.5" x2="1" y2="32" stroke="#8a8a8a" stroke-width="1.1" stroke-dasharray="1 2"/></svg>
<svg class="a" style="left:360.5px;top:51px" width="2" height="32"><line x1="1" y1="0.5" x2="1" y2="32" stroke="#8a8a8a" stroke-width="1.1" stroke-dasharray="1 2"/></svg>
<svg class="a" style="left:636.5px;top:51px" width="2" height="32"><line x1="1" y1="0.5" x2="1" y2="32" stroke="#8a8a8a" stroke-width="1.1" stroke-dasharray="1 2"/></svg>
<svg class="a" style="left:684.5px;top:51px" width="2" height="32"><line x1="1" y1="0.5" x2="1" y2="32" stroke="#8a8a8a" stroke-width="1.1" stroke-dasharray="1 2"/></svg>
<svg class="a" style="left:48px;top:52px" width="30" height="30"><path d="M3.4 26.4C4.5 17 10 8 25 3.2C21 9 19.5 17 24.8 26.4Z" fill="#2d8a1f" stroke="#a8a8a8" stroke-width="1.6" stroke-linejoin="round"/></svg>
<div class="a" style="left:89px;top:56px;width:22px;height:22px;background:#f0f0f0;box-shadow:0 0 2px #000"></div>
<div class="a" style="left:92px;top:59px;width:16px;height:16px;background:linear-gradient(160deg,#e52a2a,#d40000 50%,#b80000)"></div>
<svg class="a" style="left:124px;top:52px" width="30" height="30"><path d="M3.4 26.6C4.5 17 10.5 8 25.5 3C21.5 9 20 17 25 26.6Z" fill="#22cc08" stroke="#f4f4f4" stroke-width="2" stroke-linejoin="round"/><path d="M12 15.5A4.3 4.3 0 1 0 17.5 15" fill="none" stroke="#fff" stroke-width="2"/><path d="M13.5 12.5L18.6 13L17.6 18Z" fill="#fff"/></svg>
<svg class="a" style="left:163px;top:54px" width="26" height="26"><circle cx="13" cy="13" r="10.4" fill="none" stroke="#8e8e8e" stroke-width="2.4"/><g fill="#8e8e8e"><rect x="11.9" y="5.6" width="2.2" height="3" transform="rotate(0 13 13)"/><rect x="11.9" y="5.6" width="2.2" height="3" transform="rotate(45 13 13)"/><rect x="11.9" y="5.6" width="2.2" height="3" transform="rotate(90 13 13)"/><rect x="11.9" y="5.6" width="2.2" height="3" transform="rotate(135 13 13)"/><rect x="11.9" y="5.6" width="2.2" height="3" transform="rotate(180 13 13)"/><rect x="11.9" y="5.6" width="2.2" height="3" transform="rotate(225 13 13)"/><rect x="11.9" y="5.6" width="2.2" height="3" transform="rotate(270 13 13)"/><rect x="11.9" y="5.6" width="2.2" height="3" transform="rotate(315 13 13)"/></g><circle cx="13" cy="13" r="4.6" fill="none" stroke="#8e8e8e" stroke-width="2.2"/></svg>
<svg class="a" style="left:212px;top:55px" width="24" height="24"><path d="M1.5 4C1.5 2.5 2.2 1.8 3.5 1.8H9.5L11.5 4H21C22 4 22.5 4.7 22.5 5.5V20.5C22.5 21.5 22 22 21 22H3C2 22 1.5 21.5 1.5 20.5Z" fill="#4f87a9"/><rect x="1.5" y="4" width="21" height="3" fill="#22628e"/><rect x="1.5" y="6" width="21" height="1.2" fill="#2f6e98"/></svg>
<svg class="a" style="left:251px;top:54px" width="22" height="26"><path d="M1 1H15.5L21 6.5V25H1Z" fill="#a9a9a2"/><path d="M1 1H15.5L20 5.5V7H1Z" fill="#2f73a2"/><path d="M15.5 1V6.5H21Z" fill="#d8d8d8"/><path d="M8 7C8 4 9.5 2.5 11.5 2.3C10.5 3.5 10 5 10.3 7Z" fill="#c4c4c4"/><g font-family="Liberation Mono" font-size="5" fill="#555"><text x="5.5" y="12.5">0101</text><text x="5.5" y="18">0110</text><text x="5.5" y="23.5">0111</text></g></svg>
<svg class="a" style="left:289px;top:54px" width="22" height="26"><path d="M1 1H15.5L21 6.5V25H1Z" fill="#a9a9a2"/><path d="M1 1H15.5L20 5.5V7H1Z" fill="#2f73a2"/><path d="M15.5 1V6.5H21Z" fill="#d8d8d8"/><path d="M8 7C8 4 9.5 2.5 11.5 2.3C10.5 3.5 10 5 10.3 7Z" fill="#c4c4c4"/><g font-family="Liberation Mono" font-size="5" fill="#555"><text x="5.5" y="12.5">0101</text><text x="5.5" y="18">0110</text><text x="5.5" y="23.5">0111</text></g><path d="M5 8L16 19.5M16 8L5 19.5" stroke="#262626" stroke-width="2.4" stroke-linecap="round"/></svg>
<svg class="a" style="left:327px;top:54px" width="22" height="26"><path d="M1 1H15.5L21 6.5V25H1Z" fill="#a9a9a2"/><path d="M1 1H15.5L20 5.5V7H1Z" fill="#2f73a2"/><path d="M15.5 1V6.5H21Z" fill="#d8d8d8"/><path d="M8 7C8 4 9.5 2.5 11.5 2.3C10.5 3.5 10 5 10.3 7Z" fill="#c4c4c4"/><g font-family="Liberation Mono" font-size="5" fill="#555"><text x="5.5" y="12.5">0101</text><text x="5.5" y="18">0110</text><text x="5.5" y="23.5">0111</text></g><path d="M15.5 17.5A5.6 5.6 0 1 1 13.5 8.2" fill="none" stroke="#1e3f7a" stroke-width="2.4"/><path d="M12 4.5L16.8 8.2L12 11Z" fill="#1e3f7a"/></svg>
<svg class="a" style="left:375px;top:53px" width="22" height="27"><circle cx="9.5" cy="9.4" r="6" fill="#444" stroke="#d4d4d4" stroke-width="1.4"/><path d="M7 6A3.5 3.5 0 0 1 10.5 5.2" fill="none" stroke="#bbb" stroke-width="0.8"/><path d="M12.6 15.5L17.4 23.4" stroke="#d4d4d4" stroke-width="3.2" stroke-linecap="round"/></svg>
<svg class="a" style="left:411px;top:56px" width="26" height="22"><path d="M2.5 11L12.4 2.3V6.7H23.2V15.2H12.4V19.6Z" fill="#5db41e" stroke="#f2f2f2" stroke-width="1.8" stroke-linejoin="round"/></svg>
<svg class="a" style="left:449px;top:56px" width="26" height="22"><path d="M23.5 11L13.6 2.3V6.7H2.8V15.2H13.6V19.6Z" fill="#5db41e" stroke="#f2f2f2" stroke-width="1.8" stroke-linejoin="round"/></svg>
<svg class="a" style="left:487px;top:53px" width="28" height="27"><g fill="#f4f4f4"><rect x="3" y="5" width="22" height="1.9"/><rect x="3" y="9.4" width="22" height="1.9"/><rect x="3" y="13.8" width="22" height="1.9"/><rect x="3" y="17" width="22" height="1.9"/><rect x="3" y="20.1" width="22" height="1.9"/><rect x="3" y="23" width="22" height="1.9"/></g><rect x="19" y="9.2" width="6" height="2.4" fill="#f2d83a"/><path d="M2.5 7H9.6V2.6L18 10.6L9.6 18.5V14.2H2.5Z" fill="#5db41e" stroke="#f2f2f2" stroke-width="1.5" stroke-linejoin="round"/></svg>
<svg class="a" style="left:525px;top:54px" width="26" height="26"><rect x="2.5" y="2.3" width="21" height="2.6" fill="#f2f2f2"/><path d="M13 6.2L21.4 15.5H17.3V23H8.7V15.5H4.6Z" fill="#5db41e" stroke="#f2f2f2" stroke-width="1.6" stroke-linejoin="round"/></svg>
<svg class="a" style="left:563px;top:54px" width="26" height="26"><rect x="2.5" y="21.2" width="21" height="2.6" fill="#f2f2f2"/><path d="M13 19.8L21.4 11H17.3V3H8.7V11H4.6Z" fill="#5db41e" stroke="#f2f2f2" stroke-width="1.6" stroke-linejoin="round"/></svg>
<svg class="a" style="left:602px;top:56px" width="24" height="23"><rect x="1" y="0.8" width="22" height="20.4" fill="#f6f6f4"/><g fill="#b4b4ac"><rect x="1" y="2.9" width="22" height="1.2"/><rect x="1" y="6" width="22" height="1.2"/><rect x="1" y="9.1" width="22" height="1.2"/><rect x="1" y="12.1" width="22" height="1.2"/><rect x="1" y="15" width="22" height="1.2"/><rect x="1" y="18" width="22" height="1.2"/></g><path d="M9.5 17H22.5L16 23Z" fill="#3467ad" stroke="#3467ad" stroke-width="1.5" stroke-linejoin="round"/></svg>
<svg class="a" style="left:650px;top:56px" width="24" height="23"><rect x="1" y="0.8" width="22.2" height="20.4" fill="#f8f6f8"/><rect x="1" y="2.8" width="22.2" height="1.3" fill="#e42a2a"/><rect x="1" y="5.9" width="22.2" height="1.3" fill="#3566b0"/><rect x="1" y="8.9" width="22.2" height="1.3" fill="#66c91c"/><rect x="1" y="11.9" width="22.2" height="1.3" fill="#3566b0"/><rect x="1" y="14.8" width="22.2" height="1.3" fill="#744b84"/><rect x="1" y="17.9" width="22.2" height="1.3" fill="#d09f0a"/></svg>
<svg class="a" style="left:698.5px;top:55px" width="24" height="24"><path d="M13.5 14L19.5 20" stroke="#d6d6d6" stroke-width="3.2" stroke-linecap="round"/><circle cx="9" cy="9.5" r="6.8" fill="#474747" stroke="#d6d6d6" stroke-width="1.3"/><path d="M5.5 9.5H12.5M9 6V13" stroke="#ececec" stroke-width="1.2"/></svg>
<svg class="a" style="left:736.3px;top:55px" width="24" height="24"><path d="M13.5 14L19.5 20" stroke="#d6d6d6" stroke-width="3.2" stroke-linecap="round"/><circle cx="9" cy="9.5" r="6.8" fill="#474747" stroke="#d6d6d6" stroke-width="1.3"/><path d="M5.5 9.5H12.5" stroke="#ececec" stroke-width="1.3"/></svg>
<svg class="a" style="left:774.5px;top:55px" width="24" height="24"><path d="M13.5 14L19.5 20" stroke="#d6d6d6" stroke-width="3.2" stroke-linecap="round"/><circle cx="9" cy="9.5" r="6.8" fill="#474747" stroke="#d6d6d6" stroke-width="1.3"/><path d="M5.5 8.3H12.5M5.5 10.8H12.5" stroke="#ececec" stroke-width="1.1"/></svg>
<svg class="a" style="left:812px;top:55px" width="25" height="24"><rect x="1" y="2" width="22" height="20" fill="#f6f6f4"/><g fill="#b4b4ac"><rect x="1" y="4" width="22" height="1.1"/><rect x="1" y="7" width="22" height="1.1"/><rect x="1" y="10" width="22" height="1.1"/><rect x="1" y="13" width="22" height="1.1"/><rect x="1" y="16" width="22" height="1.1"/><rect x="1" y="19" width="22" height="1.1"/></g><rect x="6" y="1" width="1.2" height="22" fill="#8c8c8c"/><rect x="14" y="1" width="1.2" height="22" fill="#8c8c8c"/><path d="M3 4.5L7 8L3 11.5Z" fill="#2f66b2" stroke="#2f66b2" stroke-width="1"/><path d="M18 4.5L14 8L18 11.5Z" fill="#2f66b2" stroke="#2f66b2" stroke-width="1"/></svg>
<svg class="a" style="left:850px;top:55px" width="24" height="24"><rect x="1" y="1" width="22" height="22" fill="#eeeeec"/><rect x="1" y="10.8" width="22" height="1.4" fill="#9a9a9a"/><rect x="11.4" y="12" width="1.3" height="11" fill="#9a9a9a"/><g font-family="Liberation Sans" font-size="7.5" fill="#333" text-anchor="middle"><text x="12" y="8.4">1</text><text x="6.3" y="20.3">2</text><text x="17.6" y="20.3">3</text></g></svg>
</div>
<div class="a" style="left:0;top:0;width:1033px;height:744px;border-radius:10px;border:1px solid #5e5e5e;pointer-events:none"></div>
</div></div>
</div></body></html>
